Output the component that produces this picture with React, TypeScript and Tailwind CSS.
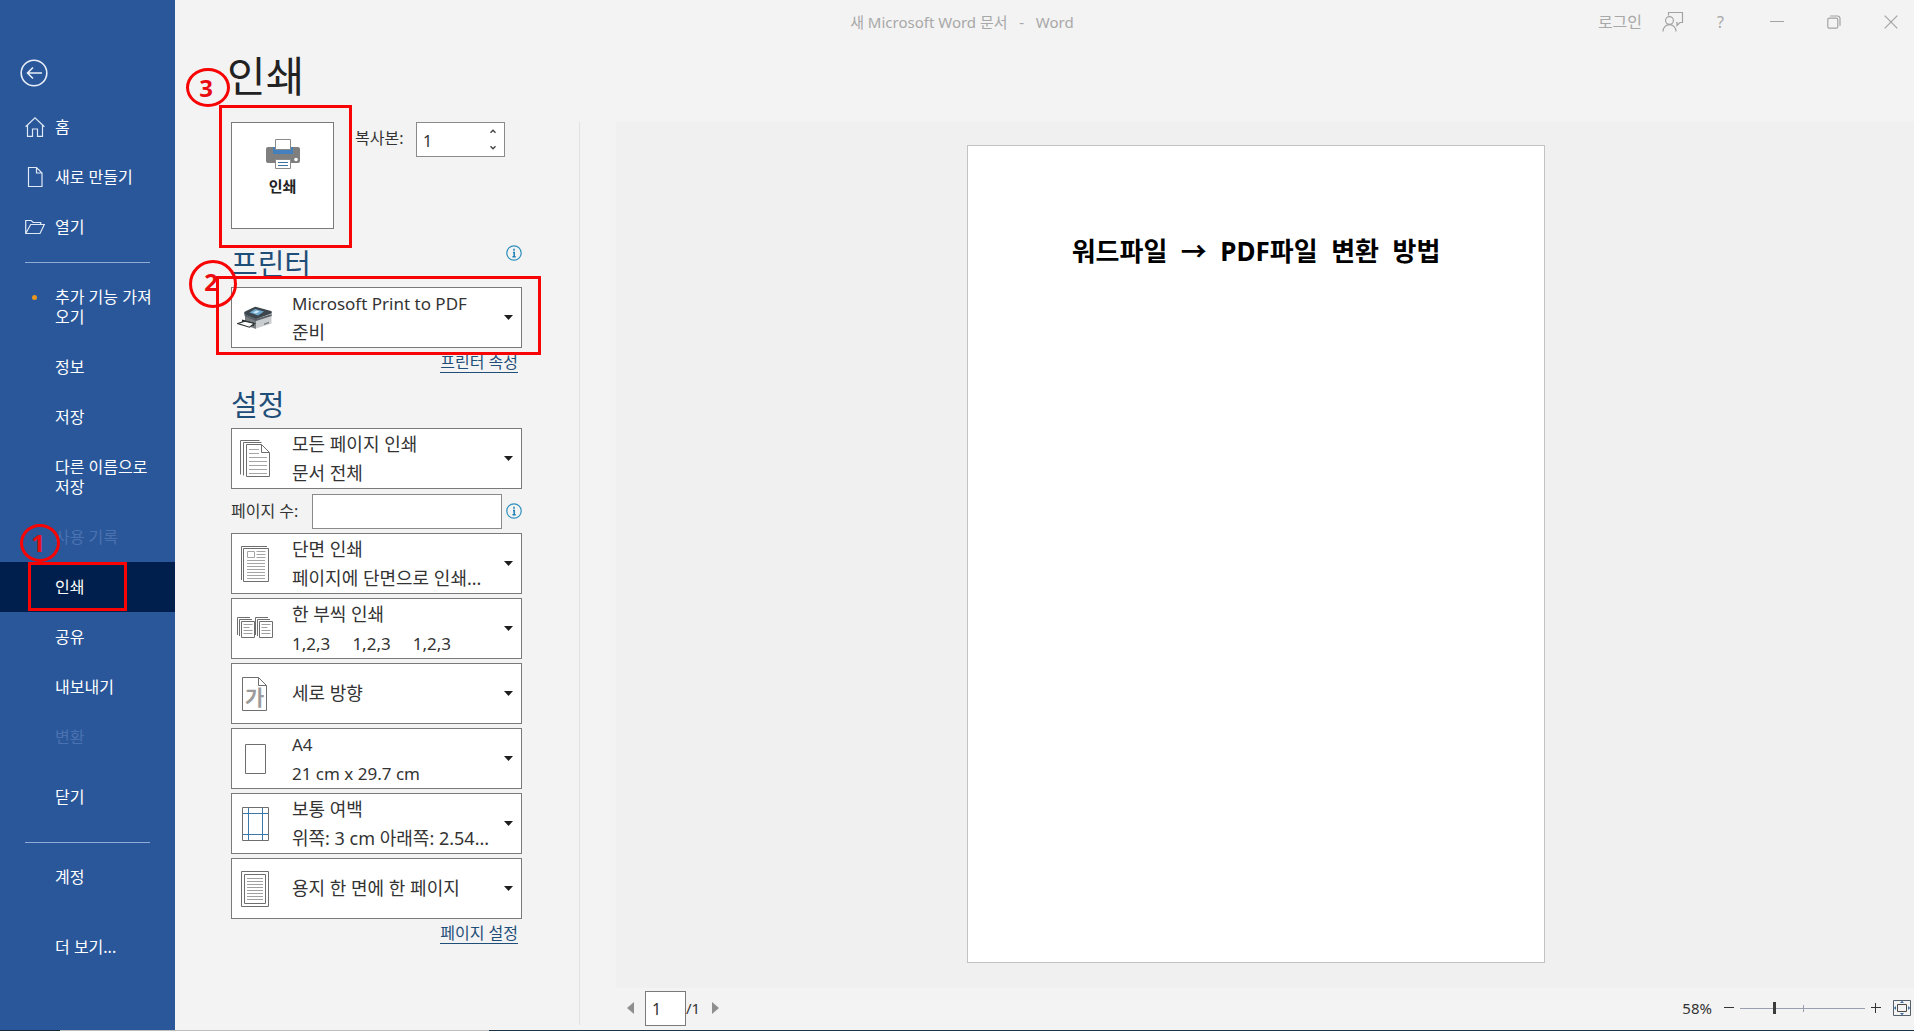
import { useId, useState, type ReactNode } from "react";

/* ---------- icons ---------- */

const BackIcon = () => (
  <svg width="28" height="28" viewBox="0 0 28 28" fill="none" stroke="#e9eff8" strokeWidth="1.6">
    <circle cx="14" cy="14" r="12.8" />
    <path d="M22 14H7.5M13 8.5 7.5 14l5.500 5.500" />
  </svg>
);

const HomeIcon = () => (
  <svg width="20" height="20" viewBox="0 0 20 20" fill="none" stroke="#dfe8f5" strokeWidth="1.2">
    <path d="M.6 9.800 10 .9l9.400 8.900M2.500 8.200v11.200h5V12h5v7.400h5V8.200" />
  </svg>
);

const NewIcon = () => (
  <svg width="20" height="22" viewBox="0 0 20 22" fill="none" stroke="#dfe8f5" strokeWidth="1.2">
    <path d="M3.500 1.500h8l5.500 5.500v13.500H3.500zM11.500 1.500V7H17" />
  </svg>
);

const OpenIcon = () => (
  <svg width="20" height="16" viewBox="0 0 20 16" fill="none" stroke="#dfe8f5" strokeWidth="1.200">
    <path d="M.7 14.500V1.500h5.500l2 2h7.500v2M.7 14.500 5.700 5.500h13.600l-4.300 9z" />
  </svg>
);

const DotIcon = () => <span className="mb-5 size-[5px] rounded-full bg-[#e8961e]" />;

const FeedbackIcon = () => (
  <svg width="22" height="22" viewBox="0 0 22 22" fill="none" stroke="#a3a3a3" strokeWidth="1.200">
    <path d="M6.500 4.500v-3H20.500v10h-2.500l-3 3v-3h-1" />
    <circle cx="7.500" cy="9.500" r="3.900" />
    <path d="M1 20.500c0-4 2.800-6.800 6.500-6.800s6.500 2.800 6.500 6.800" />
  </svg>
);

const MinimizeIcon = () => (
  <svg width="14" height="14" viewBox="0 0 14 14" stroke="#a3a3a3">
    <path d="M0 6.500h14" />
  </svg>
);

const RestoreIcon = () => (
  <svg width="14" height="14" viewBox="0 0 14 14" fill="none" stroke="#a3a3a3" strokeWidth="1.200">
    <rect x=".8" y="3.200" width="10" height="10" rx="1.500" />
    <path d="M3.200 1h7.300a2.500 2.500 0 0 1 2.500 2.500v7.300" />
  </svg>
);

const CloseIcon = () => (
  <svg width="14" height="14" viewBox="0 0 14 14" stroke="#a3a3a3" strokeWidth="1.200">
    <path d="m.7.700 12.600 12.600M13.300.7.700 13.300" />
  </svg>
);

const PrinterIcon = () => (
  <svg width="34" height="30" viewBox="0 0 34 30">
    <path d="M2 8h5v6h20V8h5a2 2 0 0 1 2 2v12a2 2 0 0 1-2 2H2a2 2 0 0 1-2-2V10a2 2 0 0 1 2-2z" fill="#7f7f7f" />
    <path d="M7 8h20v7H7z" fill="#4480bb" />
    <path d="M9.500.5h15v10h-15z" fill="#fff" stroke="#8a8a8a" />
    <path d="M9.500 20.500h15v9h-15z" fill="#fff" stroke="#8a8a8a" />
    <path d="M12 23.500h10M12 26.500h10" stroke="#3f719e" />
    <circle cx="30" cy="20.500" r="1.800" fill="#fff" />
  </svg>
);

const DeviceIcon = () => (
  <svg width="36" height="24" viewBox="0 0 36 24">
    <path d="m8 8 11 5v10L8 19z" fill="#777d80" />
    <path d="m19 13 15.500-4v8.500L19 22.500z" fill="#c9cdcf" />
    <path d="m8 5.500 9.500-4.500q1-.5 2 0l14.500 4q1.500.8.5 2.500L20 12.800q-1 .4-2 0L7.500 8.200Q6.500 6.800 8 5.500z" fill="#3d464c" />
    <path d="M7.500 8.200 19 13l15.700-5v2L19 15 7.500 10z" fill="#596167" />
    <path d="m12.500 6.500 5.500-3.500 9 2.500-6 4z" fill="#6fa9ce" />
    <path d="m16 6.500 3.500-2 3 .9-3.500 2.200z" fill="#cfe7f4" />
    <path d="m5 13.500 12 3.500v3L5 17z" fill="#25292c" />
    <path d="m.8 17.500 7-2.300 9.700 2.300-5 3.700z" fill="#fff" stroke="#2f3437" strokeWidth="1.200" />
    <path d="m27 17.500 5-1.800v1.500l-5 1.800z" fill="#777d80" />
  </svg>
);

const InfoIcon = () => (
  <svg width="16" height="16" viewBox="0 0 16 16" fill="none">
    <circle cx="8" cy="8" r="7.200" stroke="#2d8fbd" strokeWidth="1.200" />
    <path d="M8 3.700v2M7 7.500h1.200v4M6.500 11.700h3.200" stroke="#1b7fb3" strokeWidth="1.500" />
  </svg>
);

const AllPagesIcon = () => (
  <svg width="30" height="37" viewBox="0 0 30 37" fill="none" stroke="#6e6e6e">
    <path d="M.5 34.500V.5h19M3.500 35.500v-33h18" />
    <path d="M6.500 4.500h15l8 8v24h-23z" fill="#fff" />
    <path d="M21.500 4.500v8h8" />
    <path d="M9 9.500h10M9 13.500h10M9 17.500h18M9 21.500h18M9 25.500h18M9 29.500h18M9 33.500h18" stroke="#a5a5a5" />
  </svg>
);

const OneSidedIcon = () => (
  <svg width="28" height="36" viewBox="0 0 28 36" fill="none" stroke="#6e6e6e">
    <path d="M.5 34V.5H26" />
    <path d="M2.500 2.500h25v33h-25z" fill="#fff" />
    <path d="M6.500 5.500h7v6h-7zM15.500 5.500h9M15.500 8.500h9M15.500 11.500h9M6 14.500h18M6 17.500h18M6 20.500h18M6 23.500h18M6 26.500h18M6 29.500h18M6 32.500h18" stroke="#a5a5a5" />
  </svg>
);

const CollatedIcon = () => (
  <svg width="36" height="24" viewBox="0 0 36 24" fill="none" stroke="#6e6e6e">
    {[0, 18].map((x) => (
      <g key={x} transform={`translate(${x} 0)`}>
        <path d="M.5 18V.5H13M2.500 19V2.500H15" />
        <path d="M4.500 4.500h13v16h-13z" fill="#fff" />
        <path d="M6.500 7.500h9M6.500 10.500h6M6.500 13.500h9M6.500 16.500h9" stroke="#a0a0a0" />
      </g>
    ))}
  </svg>
);

const PortraitIcon = () => (
  <svg width="26" height="34" viewBox="0 0 26 34" fill="none" stroke="#6e6e6e">
    <path d="M.5.500h16l8 8v25H.500zM16.500.500v8h8" />
    <text x="3" y="28" fontSize="21" fontWeight="700" fill="#9b9b9b" stroke="none">
      가
    </text>
  </svg>
);

const PaperIcon = () => (
  <svg width="21" height="30" viewBox="0 0 21 30" fill="none" stroke="#6e6e6e">
    <path d="M.5.500h20v29H.500z" />
  </svg>
);

const MarginsIcon = () => (
  <svg width="27" height="34" viewBox="0 0 27 34" fill="none">
    <path d="M.5.500h26v33H.500z" stroke="#6e6e6e" />
    <path d="M6.500 1v32M20.500 1v32M1 6.500h25M1 27.500h25" stroke="#3b78a8" />
  </svg>
);

const PerSheetIcon = () => (
  <svg width="28" height="36" viewBox="0 0 28 36" fill="none" stroke="#6e6e6e">
    <path d="M.5.500h27v35H.500zM3.500 3.500h21v29h-21z" />
    <path d="M6 7.500h16M6 10.500h16M6 13.500h16M6 16.500h16M6 19.500h16M6 22.500h16M6 25.500h16M6 28.500h16" stroke="#a0a0a0" />
  </svg>
);

const FitIcon = () => (
  <svg width="18" height="16" viewBox="0 0 18 16" fill="none">
    <path d="M.5.500h17v15H.500z" stroke="#55606b" />
    <path d="M4.500 4.500h9v7h-9z" stroke="#4a4a4a" />
    <path d="M9 .8 11 3H7zM9 15.200 7 13h4zM.8 8 3 6v4zM17.200 8 15 10V6z" fill="#3f6ea5" />
  </svg>
);

/* ---------- callout marks ---------- */

const Frame = ({ className }: { className: string }) => (
  <span className={`pointer-events-none absolute z-10 border-[3px] border-[#f90404] ${className}`} />
);

const Bubble = ({ n, className }: { n: number; className: string }) => (
  <span
    className={`pointer-events-none absolute z-10 flex items-center justify-center rounded-[50%] border-[3px] border-[#f90404] text-2xl leading-none font-bold text-[#ea0c10] ${className}`}
  >
    {n}
  </span>
);

/* ---------- sidebar ---------- */

type NavProps = { label: string; icon?: ReactNode; tall?: boolean; disabled?: boolean; active?: boolean };

const NavItem = ({ label, icon, tall, disabled, active }: NavProps) => (
  <li className="relative">
    <button
      disabled={disabled}
      className={`flex w-full items-center pr-4 text-left text-base leading-5 ${tall ? "h-[70px]" : "h-[50px]"} ${
        active ? "bg-[#001f4d]" : ""
      } ${disabled ? "text-[#4a72b0]" : "text-white"}`}
    >
      <span className="flex w-[55px] shrink-0 items-center justify-center pl-3.5">{icon}</span>
      <span>{label}</span>
    </button>
    {active && (
      <>
        <Frame className="top-0 left-[28px] h-[49px] w-[99px]" />
        <Bubble n={1} className="-top-[38px] left-5 h-[38px] w-10 pr-1" />
      </>
    )}
  </li>
);

const Rule = () => (
  <li className="flex h-5 items-center px-[25px]">
    <hr className="w-full border-[#8fabd6]" />
  </li>
);

const Sidebar = () => (
  <nav className="w-[175px] shrink-0 bg-[#2a579a] pt-[59px]">
    <button aria-label="뒤로" className="mb-[15px] ml-5 block">
      <BackIcon />
    </button>
    <ul>
      <NavItem label="홈" icon={<HomeIcon />} />
      <NavItem label="새로 만들기" icon={<NewIcon />} />
      <NavItem label="열기" icon={<OpenIcon />} />
      <Rule />
      <NavItem label="추가 기능 가져오기" icon={<DotIcon />} tall />
      <NavItem label="정보" />
      <NavItem label="저장" />
      <NavItem label="다른 이름으로 저장" tall />
      <NavItem label="사용 기록" disabled />
      <NavItem label="인쇄" active />
      <NavItem label="공유" />
      <NavItem label="내보내기" />
      <NavItem label="변환" disabled />
      <NavItem label="닫기" tall />
      <Rule />
      <NavItem label="계정" />
    </ul>
    <ul className="mt-5">
      <NavItem label="더 보기..." />
    </ul>
  </nav>
);

/* ---------- settings column ---------- */

type PickerProps = { name: string; icon: ReactNode; title: string; detail?: string };

const hasHangul = (text: string) => /[가-힣]/.test(text);

const PickerLine = ({ text }: { text: string }) => (
  <span className={hasHangul(text) ? "text-lg leading-[29px]" : "text-[17px] leading-[29px]"}>{text}</span>
);

const Picker = ({ name, icon, title, detail }: PickerProps) => (
  <label className="relative flex h-[61px] w-full items-center border border-[#7a7a7a] bg-white text-[#333]">
    <span className="flex w-[46px] shrink-0 justify-center">{icon}</span>
    <span className="ml-3.5 flex flex-1 flex-col whitespace-pre">
      <PickerLine text={title} />
      {detail && <PickerLine text={detail} />}
    </span>
    <svg className="mr-2 shrink-0" width="9" height="5" viewBox="0 0 9 5" fill="#1e1e1e">
      <path d="M0 0h9L4.500 5z" />
    </svg>
    <select aria-label={name} className="absolute inset-0 size-full cursor-pointer opacity-0">
      <option>{title}</option>
    </select>
  </label>
);

const PanelLink = ({ children }: { children: ReactNode }) => (
  <a href="#" className="mr-1 self-end border-b border-[#1f4e79] text-base leading-[19px] text-[#1f4e79]">
    {children}
  </a>
);

const Settings = () => {
  const copiesId = useId();
  const pagesId = useId();
  const [copies, setCopies] = useState(1);
  return (
    <section className="mb-[5px] flex w-[405px] shrink-0 flex-col border-r border-[#e1e1e1] pr-[57px] pl-14">
      <div className="flex items-start">
        <div className="relative">
          <button className="flex h-[107px] w-[103px] flex-col items-center gap-[5px] border border-[#7a7a7a] bg-white pt-4 text-[15px] leading-6 font-bold text-[#222]">
            <PrinterIcon />
            인쇄
          </button>
          <Frame className="-top-[17px] -left-3 h-[143px] w-[133px]" />
          <Bubble n={3} className="-top-[54px] -left-[45px] h-[39px] w-11 pr-1" />
        </div>
        <label htmlFor={copiesId} className="mt-1 ml-[21px] text-base leading-6 text-[#333]">
          복사본:
        </label>
        <div className="ml-auto flex h-[35px] w-[89px] border border-[#8a8a8a] bg-white">
          <input
            id={copiesId}
            value={copies}
            onChange={(e) => setCopies(Number(e.target.value) || 1)}
            className="w-[66px] pt-0.5 pl-1.5 text-base text-[#333] outline-none"
          />
          <div className="flex flex-col justify-between py-1.5">
            <button aria-label="늘리기" onClick={() => setCopies(copies + 1)}>
              <svg width="20" height="5" viewBox="0 0 20 5" fill="none" stroke="#444" strokeWidth="1.400">
                <path d="m7.500 3.800 2.500-2.500 2.500 2.500" />
              </svg>
            </button>
            <button aria-label="줄이기" onClick={() => setCopies(Math.max(1, copies - 1))}>
              <svg width="20" height="5" viewBox="0 0 20 5" fill="none" stroke="#444" strokeWidth="1.400">
                <path d="m7.500 1.200 2.500 2.500 2.500-2.500" />
              </svg>
            </button>
          </div>
        </div>
        <span className="w-[17px]" />
      </div>

      <div className="mt-4 flex h-[42px] items-start justify-between">
        <h2 className="text-[29px] leading-[38px] text-[#1f4e79]">프린터</h2>
        <button aria-label="프린터 정보" className="self-start">
          <InfoIcon />
        </button>
      </div>
      <div className="relative">
        <Picker name="프린터" icon={<DeviceIcon />} title="Microsoft Print to PDF" detail="준비" />
        <Frame className="-top-[11px] -left-[15px] h-[79px] w-[325px]" />
        <Bubble n={2} className="-top-[27px] -left-[42px] size-12 pr-1 pb-1" />
      </div>
      <div className="mt-[5px] flex flex-col">
        <PanelLink>프린터 속성</PanelLink>
      </div>

      <h2 className="mt-[13px] mb-1 text-[29px] leading-[38px] text-[#1f4e79]">설정</h2>
      <Picker name="인쇄 범위" icon={<AllPagesIcon />} title="모든 페이지 인쇄" detail="문서 전체" />
      <div className="my-1 flex h-[36px] items-center">
        <label htmlFor={pagesId} className="w-[81px] text-base leading-6 text-[#333]">
          페이지 수:
        </label>
        <input id={pagesId} className="h-[35px] w-[190px] border border-[#8a8a8a] bg-white px-2 outline-none" />
        <button aria-label="페이지 수 정보" className="ml-auto">
          <InfoIcon />
        </button>
      </div>
      <div className="flex flex-col gap-1">
        <Picker name="양면 설정" icon={<OneSidedIcon />} title="단면 인쇄" detail="페이지에 단면으로 인쇄..." />
        <Picker name="한 부씩 인쇄" icon={<CollatedIcon />} title="한 부씩 인쇄" detail="1,2,3     1,2,3     1,2,3" />
        <Picker name="용지 방향" icon={<PortraitIcon />} title="세로 방향" />
        <Picker name="용지 크기" icon={<PaperIcon />} title="A4" detail="21 cm x 29.7 cm" />
        <Picker name="여백" icon={<MarginsIcon />} title="보통 여백" detail="위쪽: 3 cm 아래쪽: 2.54..." />
        <Picker name="면당 페이지" icon={<PerSheetIcon />} title="용지 한 면에 한 페이지" />
      </div>
      <div className="mt-[5px] flex flex-col">
        <PanelLink>페이지 설정</PanelLink>
      </div>
    </section>
  );
};

/* ---------- preview ---------- */

const Preview = () => {
  const [position, setPosition] = useState(26.7);
  const zoom = Math.round(position <= 50 ? 10 + position * 1.8 : 100 + (position - 50) * 8);
  return (
    <section className="ml-9 flex min-w-0 flex-1 flex-col">
      <div className="flex flex-1 justify-center bg-[#f0f0f0] pt-[23px] pr-[18px] pb-6">
        <article className="h-[818px] w-[578px] border border-[#c3c3c3] bg-white pt-[87px] text-center">
          <h3 className="text-[26px] leading-9 font-bold whitespace-pre text-black">
            워드파일  →  PDF파일  변환  방법
          </h3>
        </article>
      </div>
      <footer className="flex h-[42px] items-center justify-between pr-[3px] pb-0.5 pl-[11px] text-[15px] text-[#333]">
        <div className="flex items-center">
          <button aria-label="이전 페이지">
            <svg width="7" height="12" viewBox="0 0 7 12" fill="#8e8e8e">
              <path d="M7 0v12L0 6z" />
            </svg>
          </button>
          <input
            aria-label="현재 페이지"
            defaultValue="1"
            className="ml-[11px] h-[35px] w-[41px] border border-[#7a7a7a] bg-white pt-0.5 pl-1.5 text-base outline-none"
          />
          <span>/1</span>
          <button aria-label="다음 페이지" className="ml-3">
            <svg width="7" height="12" viewBox="0 0 7 12" fill="#8e8e8e">
              <path d="M0 0v12l7-6z" />
            </svg>
          </button>
        </div>
        <div className="flex items-center">
          <output>{zoom}%</output>
          <button aria-label="축소" className="ml-3" onClick={() => setPosition(Math.max(0, position - 5))}>
            <svg width="10" height="10" viewBox="0 0 10 10" stroke="#333">
              <path d="M0 4.500h10" />
            </svg>
          </button>
          <div className="relative mx-1.5 flex h-4 w-[125px] items-center">
            <span className="absolute top-[5px] left-1/2 h-[7px] w-px bg-[#9a9fb0]" />
            <input
              type="range"
              aria-label="확대/축소"
              min={0}
              max={100}
              step={0.1}
              value={position}
              onChange={(e) => setPosition(Number(e.target.value))}
              className="relative h-3 w-full appearance-none bg-transparent [&::-webkit-slider-runnable-track]:h-px [&::-webkit-slider-runnable-track]:bg-[#9a9fb0] [&::-webkit-slider-thumb]:-mt-[6px] [&::-webkit-slider-thumb]:h-3 [&::-webkit-slider-thumb]:w-[3px] [&::-webkit-slider-thumb]:appearance-none [&::-webkit-slider-thumb]:bg-[#3b3b3b]"
            />
          </div>
          <button aria-label="확대" onClick={() => setPosition(Math.min(100, position + 5))}>
            <svg width="10" height="10" viewBox="0 0 10 10" stroke="#333">
              <path d="M0 4.500h10M4.500 0v10" />
            </svg>
          </button>
          <button aria-label="페이지 크기에 맞게" className="ml-3">
            <FitIcon />
          </button>
        </div>
      </footer>
    </section>
  );
};

/* ---------- page ---------- */

export default function App() {
  return (
    <div className="flex min-h-screen flex-col bg-[#f3f3f3] font-['Noto_Sans','Noto_Sans_CJK_KR',sans-serif]">
      <div className="flex flex-1">
        <Sidebar />
        <main className="flex min-w-0 flex-1 flex-col">
          <header className="flex h-11 items-center text-[#a8a8a8]">
            <p className="flex-1 pl-[151px] text-center text-[15px] whitespace-pre">새 Microsoft Word 문서   -   Word</p>
            <div className="flex items-center pr-4">
              <button className="text-base">로그인</button>
              <button aria-label="의견 보내기" className="ml-5">
                <FeedbackIcon />
              </button>
              <button aria-label="도움말" className="ml-[33px] text-base">
                ?
              </button>
              <button aria-label="최소화" className="ml-[46px]">
                <MinimizeIcon />
              </button>
              <button aria-label="이전 크기로 복원" className="ml-[43px]">
                <RestoreIcon />
              </button>
              <button aria-label="닫기" className="ml-[43px]">
                <CloseIcon />
              </button>
            </div>
          </header>
          <h1 className="mt-3 mb-[26px] ml-[52px] text-[42px] leading-10 text-[#222]">인쇄</h1>
          <div className="flex flex-1">
            <Settings />
            <Preview />
          </div>
        </main>
      </div>
      <div className="flex h-px">
        <span className="w-[60px] bg-[#14283a]" />
        <span className="w-[429px] bg-[#bdbdbd]" />
        <span className="flex-1 bg-[#1d3446]" />
      </div>
    </div>
  );
}
